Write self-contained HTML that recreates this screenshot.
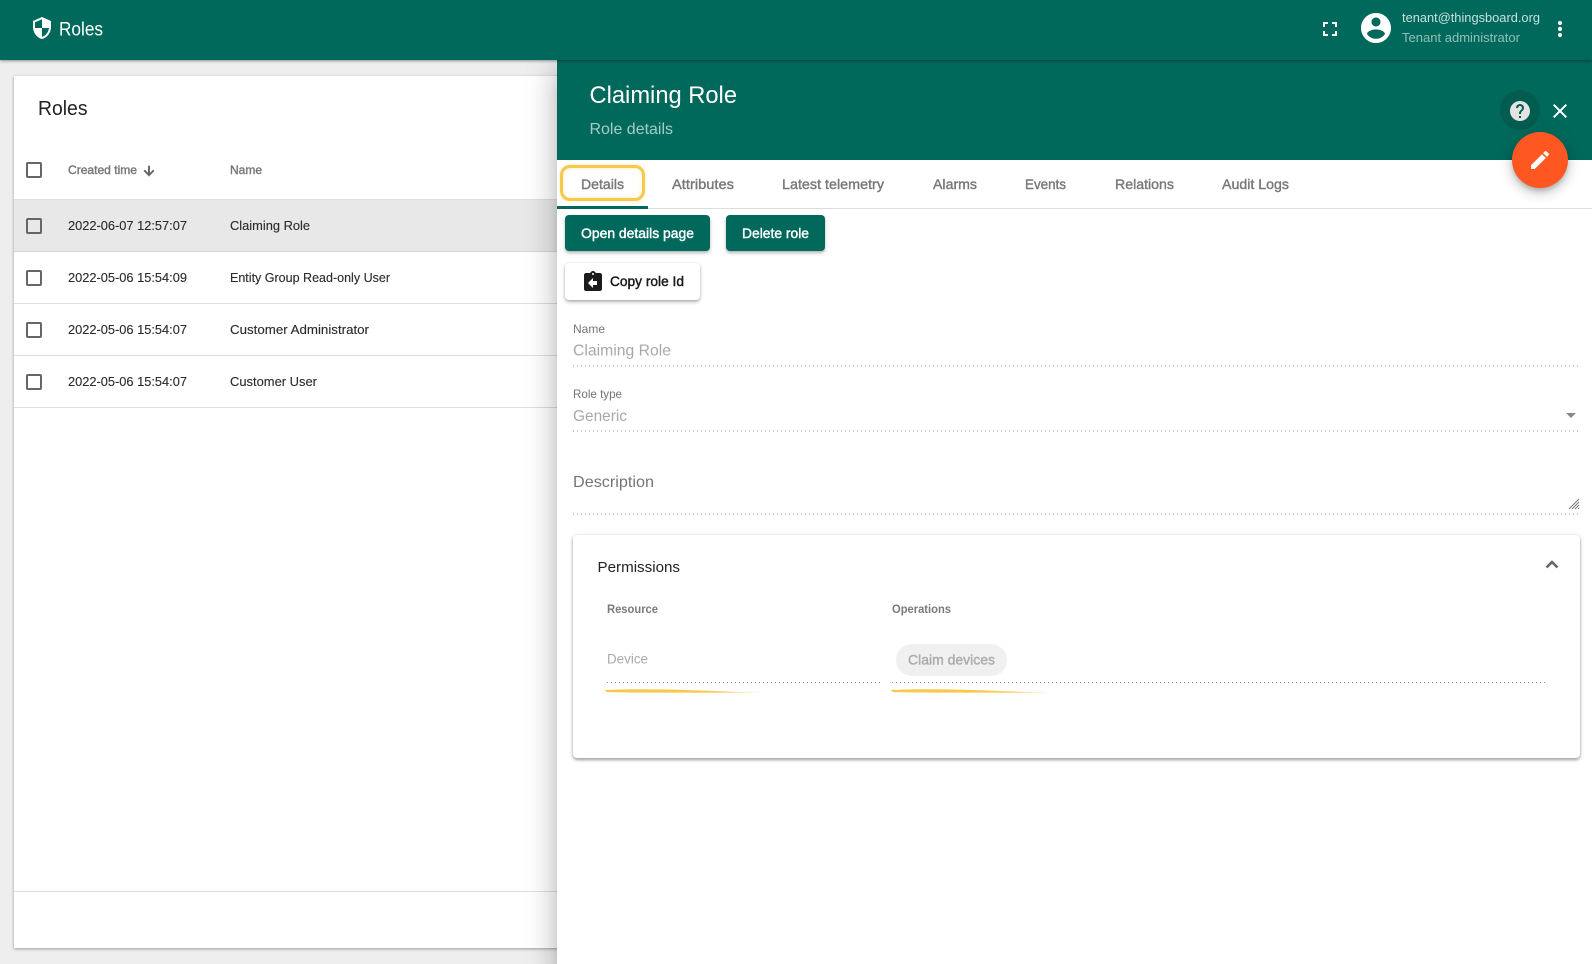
<!DOCTYPE html>
<html><head><meta charset="utf-8"><title>Roles</title>
<style>
html,body{margin:0;padding:0;width:1592px;height:964px;overflow:hidden;background:#eee;font-family:"Liberation Sans",sans-serif}
div{position:absolute;box-sizing:border-box}
svg{position:absolute;left:0;top:0}
text{font-family:"Liberation Sans",sans-serif}
.m{stroke-width:.4px}
.r{stroke-width:.12px;stroke:#2a2a2a}
</style></head><body>
<div style="left:14px;top:76px;width:560px;height:872px;background:#fff;box-shadow:0 1px 3px rgba(0,0,0,.35)"></div>
<div style="left:14px;top:200px;width:545px;height:52px;background:#e8e8e8"></div>
<div style="left:14px;top:199px;width:545px;height:1px;background:#ddd"></div>
<div style="left:14px;top:251px;width:545px;height:1px;background:#d5d5d5"></div>
<div style="left:14px;top:303px;width:545px;height:1px;background:#ddd"></div>
<div style="left:14px;top:355px;width:545px;height:1px;background:#ddd"></div>
<div style="left:14px;top:407px;width:545px;height:1px;background:#ddd"></div>
<div style="left:14px;top:891px;width:545px;height:1px;background:#ddd"></div>
<div style="left:26px;top:162px;width:16px;height:16px;border:2px solid #666;border-radius:2px"></div>
<div style="left:26px;top:218px;width:16px;height:16px;border:2px solid #666;border-radius:2px"></div>
<div style="left:26px;top:270px;width:16px;height:16px;border:2px solid #666;border-radius:2px"></div>
<div style="left:26px;top:322px;width:16px;height:16px;border:2px solid #666;border-radius:2px"></div>
<div style="left:26px;top:374px;width:16px;height:16px;border:2px solid #666;border-radius:2px"></div>

<!-- side panel -->
<div style="left:557px;top:60px;width:1035px;height:904px;background:#fff;box-shadow:0 8px 10px -5px rgba(0,0,0,.2),0 16px 24px 2px rgba(0,0,0,.14),0 6px 30px 5px rgba(0,0,0,.12)"></div>
<div style="left:557px;top:60px;width:1035px;height:100px;background:#00695c"></div>
<div style="left:0;top:0;width:1592px;height:60px;background:#00695c;box-shadow:0 1px 3px rgba(0,0,0,.4)"></div>
<div style="left:557px;top:208px;width:1035px;height:1px;background:#ddd"></div>
<div style="left:557px;top:206px;width:91px;height:2.5px;background:#00695c"></div>
<div style="left:559.5px;top:165px;width:85.5px;height:36px;border:3px solid #f5c94c;border-radius:10px;box-shadow:inset 0 0 5px rgba(246,201,78,.35),0 0 3px rgba(246,201,78,.4)"></div>
<div style="left:565px;top:215px;width:145px;height:36px;background:#00695c;border-radius:4px;box-shadow:0 2px 3px rgba(0,0,0,.3)"></div>
<div style="left:726px;top:215px;width:99px;height:36px;background:#00695c;border-radius:4px;box-shadow:0 2px 3px rgba(0,0,0,.3)"></div>
<div style="left:565px;top:263px;width:135px;height:37px;background:#fff;border-radius:4px;box-shadow:0 2px 3px rgba(0,0,0,.3),0 0 2px rgba(0,0,0,.1)"></div>
<div style="left:573px;top:535px;width:1007px;height:223px;background:#fff;border-radius:4px;box-shadow:0 2px 3px rgba(0,0,0,.35),0 0 4px rgba(0,0,0,.1)"></div>
<div style="left:896px;top:644px;width:111px;height:32px;background:#f0f0f0;border-radius:16px"></div>
<div style="left:1500px;top:90px;width:40px;height:40px;background:#025c50;border-radius:50%"></div>
<div style="left:1512px;top:132px;width:56px;height:56px;background:#ff5722;border-radius:50%;box-shadow:0 3px 5px -1px rgba(0,0,0,.2),0 6px 10px rgba(0,0,0,.14),0 1px 18px rgba(0,0,0,.12)"></div>

<svg width="1592" height="964" viewBox="0 0 1592 964">
<defs>
<linearGradient id="y" x1="0" x2="1" y1="0" y2="0"><stop offset="0" stop-color="#f6c94e"/><stop offset=".6" stop-color="#f6c94e"/><stop offset="1" stop-color="#f6c94e" stop-opacity=".45"/></linearGradient>
</defs>
<!-- header icons -->
<path transform="translate(30 16)" fill="#fff" d="M12 1L3 5v6c0 5.55 3.84 10.74 9 12 5.16-1.26 9-6.45 9-12V5l-9-4zm0 10.99h7c-.53 4.12-3.28 7.79-7 8.94V12H5V6.3l7-3.11v8.8z"/>
<text x="59" y="35.500" font-size="19" fill="#fff" textLength="44" lengthAdjust="spacingAndGlyphs">Roles</text>
<path transform="translate(1318 17)" fill="#fff" d="M7 14H5v5h5v-2H7v-3zm-2-4h2V7h3V5H5v5zm12 7h-3v2h5v-5h-2v3zM14 5v2h3v3h2V5h-5z"/>
<path transform="translate(1358 10) scale(1.5)" fill="#fff" d="M12 2C6.48 2 2 6.48 2 12s4.48 10 10 10 10-4.48 10-10S17.52 2 12 2zm0 3c1.66 0 3 1.34 3 3s-1.34 3-3 3-3-1.34-3-3 1.34-3 3-3zm0 14.2c-2.5 0-4.71-1.28-6-3.22.03-1.99 4-3.08 6-3.08 1.99 0 5.97 1.09 6 3.08-1.29 1.94-3.5 3.22-6 3.22z"/>
<text x="1402" y="22" font-size="13" fill="#c6e0dc" textLength="138" lengthAdjust="spacingAndGlyphs">tenant@thingsboard.org</text>
<text x="1402" y="42" font-size="13" fill="#8fc0b8" textLength="118" lengthAdjust="spacingAndGlyphs">Tenant administrator</text>
<circle cx="1560" cy="23" r="2.1" fill="#fff"/><circle cx="1560" cy="29" r="2.1" fill="#fff"/><circle cx="1560" cy="35" r="2.1" fill="#fff"/>

<!-- table -->
<text x="38" y="115" font-size="20" fill="#222" textLength="49.5" lengthAdjust="spacingAndGlyphs">Roles</text>
<text class="m" x="68" y="174" font-size="12" fill="#777" stroke="#777" textLength="69" lengthAdjust="spacingAndGlyphs">Created time</text>
<path transform="translate(141.5 163.5) scale(.625)" fill="#666" stroke="#666" stroke-width="1" d="M20 12l-1.41-1.41L13 16.17V4h-2v12.17l-5.58-5.59L4 12l8 8 8-8z"/>
<text class="m" x="230" y="174" font-size="12" fill="#777" stroke="#777" textLength="32" lengthAdjust="spacingAndGlyphs">Name</text>
<g font-size="13" fill="#2a2a2a">
<text class="r" x="68" y="230" textLength="119" lengthAdjust="spacingAndGlyphs">2022-06-07 12:57:07</text>
<text class="r" x="230" y="230" textLength="80" lengthAdjust="spacingAndGlyphs">Claiming Role</text>
<text class="r" x="68" y="282" textLength="119" lengthAdjust="spacingAndGlyphs">2022-05-06 15:54:09</text>
<text class="r" x="230" y="282" textLength="160" lengthAdjust="spacingAndGlyphs">Entity Group Read-only User</text>
<text class="r" x="68" y="334" textLength="119" lengthAdjust="spacingAndGlyphs">2022-05-06 15:54:07</text>
<text class="r" x="230" y="334" textLength="139" lengthAdjust="spacingAndGlyphs">Customer Administrator</text>
<text class="r" x="68" y="386" textLength="119" lengthAdjust="spacingAndGlyphs">2022-05-06 15:54:07</text>
<text class="r" x="230" y="386" textLength="87" lengthAdjust="spacingAndGlyphs">Customer User</text>
</g>

<!-- panel header -->
<text x="589.500" y="103" font-size="24" fill="#fff" textLength="147.500" lengthAdjust="spacingAndGlyphs">Claiming Role</text>
<text x="589.500" y="134" font-size="16" fill="#a3cdc7" textLength="83.500" lengthAdjust="spacingAndGlyphs">Role details</text>
<path transform="translate(1508 99)" fill="#e3e3e3" d="M12 2C6.48 2 2 6.48 2 12s4.48 10 10 10 10-4.48 10-10S17.52 2 12 2zm1 17h-2v-2h2v2zm2.07-7.75l-.9.92C13.45 12.9 13 13.5 13 15h-2v-.5c0-1.1.45-2.1 1.17-2.83l1.24-1.26c.37-.36.59-.86.59-1.41 0-1.1-.9-2-2-2s-2 .9-2 2H8c0-2.21 1.79-4 4-4s4 1.79 4 4c0 .88-.36 1.68-.93 2.25z"/>
<path transform="translate(1548 99)" fill="#fff" d="M19 6.41L17.59 5 12 10.59 6.41 5 5 6.41 10.59 12 5 17.59 6.41 19 12 13.41 17.59 19 19 17.59 13.41 12z"/>
<path transform="translate(1528 148)" fill="#fff" d="M3 17.25V21h3.75L17.81 9.94l-3.75-3.75L3 17.25zM20.71 7.04a1 1 0 0 0 0-1.41l-2.34-2.34a1 1 0 0 0-1.41 0l-1.83 1.83 3.75 3.75 1.83-1.83z"/>

<!-- tabs -->
<g font-size="14" fill="#787878" stroke="#787878">
<text class="m" x="581" y="189" textLength="43" lengthAdjust="spacingAndGlyphs">Details</text>
<text class="m" x="672" y="189" textLength="62" lengthAdjust="spacingAndGlyphs">Attributes</text>
<text class="m" x="782" y="189" textLength="102" lengthAdjust="spacingAndGlyphs">Latest telemetry</text>
<text class="m" x="933" y="189" textLength="44" lengthAdjust="spacingAndGlyphs">Alarms</text>
<text class="m" x="1025" y="189" textLength="41" lengthAdjust="spacingAndGlyphs">Events</text>
<text class="m" x="1115" y="189" textLength="59" lengthAdjust="spacingAndGlyphs">Relations</text>
<text class="m" x="1222" y="189" textLength="67" lengthAdjust="spacingAndGlyphs">Audit Logs</text>
</g>

<!-- buttons -->
<text class="m" x="581" y="238" font-size="14" fill="#fff" stroke="#fff" textLength="113" lengthAdjust="spacingAndGlyphs">Open details page</text>
<text class="m" x="742" y="238" font-size="14" fill="#fff" stroke="#fff" textLength="67" lengthAdjust="spacingAndGlyphs">Delete role</text>
<path transform="translate(581 270)" fill="#1c1c1c" d="M19 3h-4.18C14.4 1.84 13.3 1 12 1c-1.3 0-2.4.84-2.82 2H5c-1.1 0-2 .9-2 2v14c0 1.1.9 2 2 2h14c1.1 0 2-.9 2-2V5c0-1.1-.9-2-2-2zm-7 0c.55 0 1 .45 1 1s-.45 1-1 1-1-.45-1-1 .45-1 1-1zm4 12h-4v3l-5-5 5-5v3h4v4z"/>
<text class="m" x="610" y="286" font-size="14" fill="#1a1a1a" stroke="#1a1a1a" style="stroke-width:.45px" textLength="74" lengthAdjust="spacingAndGlyphs">Copy role Id</text>

<!-- form -->
<text x="573" y="333" font-size="12" fill="#757575" textLength="32" lengthAdjust="spacingAndGlyphs">Name</text>
<text x="573" y="355.500" font-size="16" fill="#a8a8a8" textLength="98" lengthAdjust="spacingAndGlyphs">Claiming Role</text>
<line x1="573" x2="1578" y1="366" y2="366" stroke="#999" stroke-width="1" stroke-dasharray="1 3"/>
<text x="573" y="398" font-size="12" fill="#757575" textLength="49" lengthAdjust="spacingAndGlyphs">Role type</text>
<text x="573" y="421" font-size="16" fill="#a8a8a8" textLength="54" lengthAdjust="spacingAndGlyphs">Generic</text>
<line x1="573" x2="1578" y1="431" y2="431" stroke="#999" stroke-width="1" stroke-dasharray="1 3"/>
<path d="M1566 413h10l-5 5z" fill="#8a8a8a"/>
<text x="573" y="487" font-size="16" fill="#757575" textLength="81" lengthAdjust="spacingAndGlyphs">Description</text>
<line x1="573" x2="1578" y1="514" y2="514" stroke="#999" stroke-width="1" stroke-dasharray="1 3"/>
<path d="M1569 509l10-10M1572 509l7-7M1575 509l4-4M1578 509l1-1" stroke="#777" stroke-width="1" fill="none"/>

<!-- permissions -->
<text x="597.500" y="572" font-size="15" fill="#222" textLength="82.500" lengthAdjust="spacingAndGlyphs">Permissions</text>
<path d="M1546.500 567.500l5.500-5.500 5.500 5.500" fill="none" stroke="#666" stroke-width="2.500"/>
<text x="607" y="613" font-size="12" font-weight="700" fill="#7a7a7a" textLength="51" lengthAdjust="spacingAndGlyphs">Resource</text>
<text x="892" y="613" font-size="12" font-weight="700" fill="#7a7a7a" textLength="59" lengthAdjust="spacingAndGlyphs">Operations</text>
<text x="607" y="663.500" font-size="14" fill="#ababab" textLength="41" lengthAdjust="spacingAndGlyphs">Device</text>
<text class="m" x="908" y="664.500" font-size="14" fill="#ababab" stroke="#ababab" textLength="87" lengthAdjust="spacingAndGlyphs">Claim devices</text>
<line x1="607" x2="881" y1="682.500" y2="682.500" stroke="#999" stroke-width="1" stroke-dasharray="1 3"/>
<line x1="892" x2="1546" y1="682.500" y2="682.500" stroke="#999" stroke-width="1" stroke-dasharray="1 3"/>
<path d="M605 690C640 688 700 690 765 693C700 692.700 640 693 609 692.300C606 692 605 691 605 690z" fill="url(#y)"/>
<path d="M891 690C926 688 986 690 1051 693C986 692.700 926 693 895 692.300C892 692 891 691 891 690z" fill="url(#y)"/>
</svg>
</body></html>
